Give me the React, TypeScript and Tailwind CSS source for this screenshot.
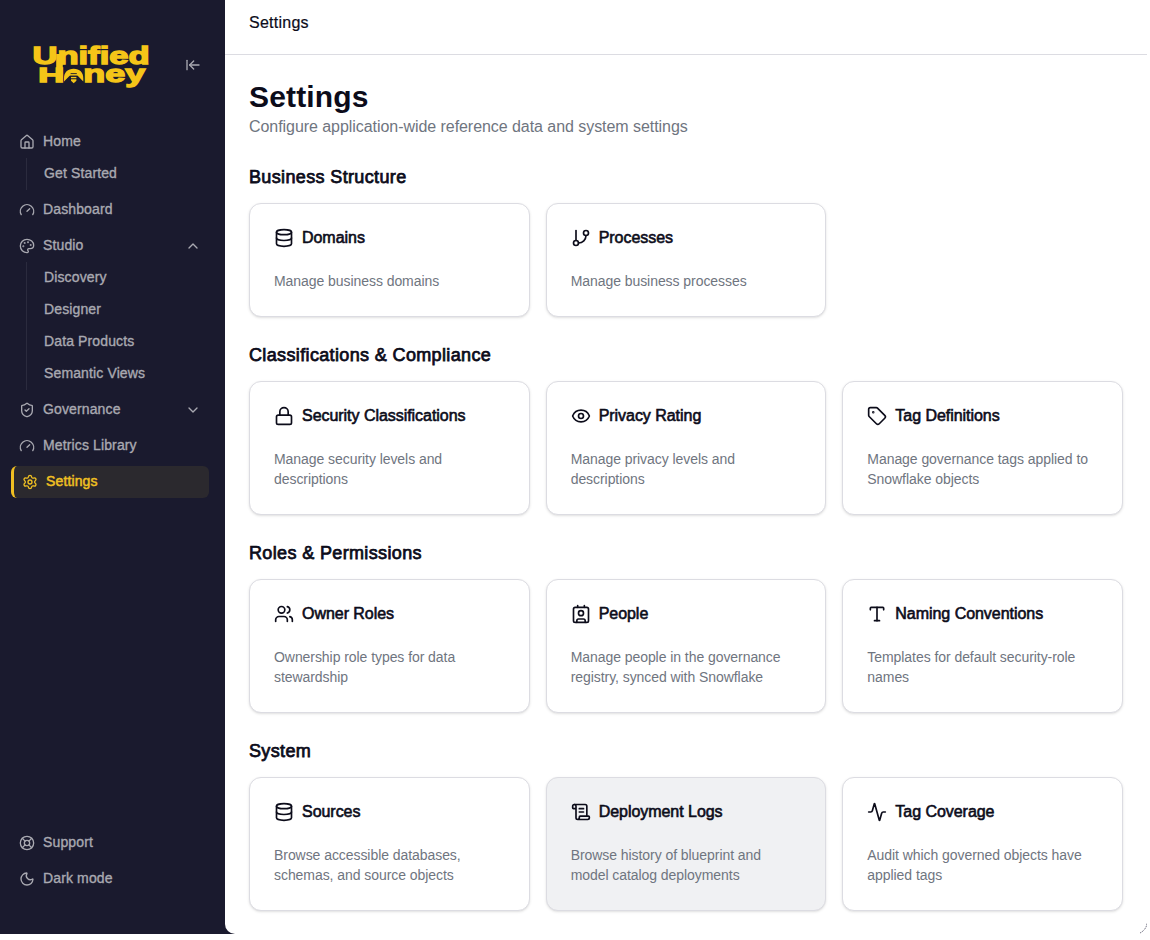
import type { ReactNode } from 'react'
import {
  Activity,
  ArrowLeftToLine,
  ChevronDown,
  ChevronUp,
  Contact,
  Database,
  Eye,
  Gauge,
  GitBranch,
  House,
  LifeBuoy,
  Lock,
  Moon,
  Palette,
  ScrollText,
  Settings,
  ShieldCheck,
  Tag,
  Type,
  Users,
  type LucideIcon,
} from 'lucide-react'
import { clsx } from 'clsx'

type SettingCard = {
  title: string
  description: string
  icon: LucideIcon
  highlighted?: boolean
}

const SECTIONS: { title: string; cards: SettingCard[] }[] = [
  {
    title: 'Business Structure',
    cards: [
      { title: 'Domains', description: 'Manage business domains', icon: Database },
      { title: 'Processes', description: 'Manage business processes', icon: GitBranch },
    ],
  },
  {
    title: 'Classifications & Compliance',
    cards: [
      { title: 'Security Classifications', description: 'Manage security levels and descriptions', icon: Lock },
      { title: 'Privacy Rating', description: 'Manage privacy levels and descriptions', icon: Eye },
      { title: 'Tag Definitions', description: 'Manage governance tags applied to Snowflake objects', icon: Tag },
    ],
  },
  {
    title: 'Roles & Permissions',
    cards: [
      { title: 'Owner Roles', description: 'Ownership role types for data stewardship', icon: Users },
      { title: 'People', description: 'Manage people in the governance registry, synced with Snowflake', icon: Contact },
      { title: 'Naming Conventions', description: 'Templates for default security-role names', icon: Type },
    ],
  },
  {
    title: 'System',
    cards: [
      { title: 'Sources', description: 'Browse accessible databases, schemas, and source objects', icon: Database },
      {
        title: 'Deployment Logs',
        description: 'Browse history of blueprint and model catalog deployments',
        icon: ScrollText,
        highlighted: true,
      },
      { title: 'Tag Coverage', description: 'Audit which governed objects have applied tags', icon: Activity },
    ],
  },
]

function Logo() {
  return (
    <svg
      aria-label="Unified Honey"
      className="h-[44px] w-[118px] overflow-visible fill-[#f5c518] font-bold tracking-normal"
      viewBox="0 0 118 44"
    >
      <g className="[-webkit-text-stroke:0]" stroke="#f5c518" strokeWidth="1.3">
        <text x="-0.6" y="18.200" fontSize="23.5" textLength="117.200" lengthAdjust="spacingAndGlyphs">Unified</text>
        <text x="5.200" y="36" fontSize="20" textLength="26" lengthAdjust="spacingAndGlyphs">H</text>
        <text x="50.200" y="36" fontSize="24" textLength="62" lengthAdjust="spacingAndGlyphs">ney</text>
      </g>
      {/* shared stem between the two lines */}
      <rect x="23.2" y="8" width="6.600" height="24" />
      {/* bee that stands in for the "o" */}
      <path d="M31 32.500c0-6.200 3.700-9.700 9.700-9.700s9.600 3.500 9.600 9.700v3l-5.600-5.700h-8l-5.700 5.700z" />
      <path d="M38 30.800h5.400v1.500H38zM38 33.200h5.400v1.500l-2.700 2.500-2.700-2.500z" />
      <path d="M37.600 27.600h6.200M37 30.200h7.400" fill="none" stroke="#1a1a2e" strokeWidth="0.9" />
    </svg>
  )
}

type NavItemProps = {
  icon: LucideIcon
  label: string
  active?: boolean
  trailing?: ReactNode
}

function NavItem({ icon: Icon, label, active, trailing }: NavItemProps) {
  return (
    <button
      className={clsx(
        'flex h-8 w-full items-center gap-2 rounded-md px-2 text-left',
        active && 'border-l-[3px] border-[#f0bf22] bg-[#2b292e] text-[#f0c022] [-webkit-text-stroke:0.5px]',
      )}
      type="button"
    >
      <Icon className="size-4 shrink-0" />
      <span className="flex-1 pb-0.5">{label}</span>
      {trailing}
    </button>
  )
}

function SubNav({ items }: { items: string[] }) {
  return (
    <div className="ml-[15px] border-l border-[#2b2b3e]">
      {items.map((item) => (
        <a className="flex h-8 items-center pb-0.5 pl-[17px]" key={item}>
          {item}
        </a>
      ))}
    </div>
  )
}

function Sidebar() {
  return (
    <aside className="flex w-[225px] shrink-0 flex-col pr-4 pl-[11px] text-sm tracking-[0.13px] text-[#a9a9b1] [-webkit-text-stroke:0.35px]">
      <div className="flex h-[126px] items-start justify-between pt-[46px] pr-2 pl-[22px]">
        <Logo />
        <ArrowLeftToLine className="mt-[11px] size-4" />
      </div>

      <nav className="flex flex-1 flex-col gap-1">
        <div>
          <NavItem icon={House} label="Home" />
          <SubNav items={['Get Started']} />
        </div>
        <NavItem icon={Gauge} label="Dashboard" />
        <div>
          <NavItem icon={Palette} label="Studio" trailing={<ChevronUp className="size-4" />} />
          <SubNav items={['Discovery', 'Designer', 'Data Products', 'Semantic Views']} />
        </div>
        <NavItem icon={ShieldCheck} label="Governance" trailing={<ChevronDown className="size-4" />} />
        <NavItem icon={Gauge} label="Metrics Library" />
        <NavItem active icon={Settings} label="Settings" />
      </nav>

      <div className="flex flex-col gap-1 pb-[39px]">
        <NavItem icon={LifeBuoy} label="Support" />
        <NavItem icon={Moon} label="Dark mode" />
      </div>
    </aside>
  )
}

function Card({ title, description, icon: Icon, highlighted }: SettingCard) {
  return (
    <article
      className={clsx(
        'flex flex-col rounded-xl border border-[#dcdce2] px-6 pt-6 pb-[25px] shadow-sm',
        highlighted ? 'bg-[#f0f1f3]' : 'bg-white',
      )}
    >
      <h3 className="flex h-5 items-center gap-2 text-base leading-5 tracking-[-0.04px] [-webkit-text-stroke:0.6px]">
        <Icon className="size-5 shrink-0" />
        {title}
      </h3>
      <p className="mt-[23px] text-sm tracking-[-0.06px] text-[#6f7580]">{description}</p>
    </article>
  )
}

export default function App() {
  return (
    <div className="h-[940px] w-full overflow-hidden bg-white font-['Liberation_Sans',sans-serif] text-[#0c0c1a]">
      <div className="flex h-[934px] w-[1147px] bg-[#1a1a2e]">
        <Sidebar />

        <main className="relative min-w-0 flex-1 rounded-bl-[10px] bg-white">
          <header className="flex h-[55px] items-center border-b border-[#dcdce2] px-6 pb-2">
            <span className="tracking-[0.25px] [-webkit-text-stroke:0.2px]">Settings</span>
          </header>

          <div className="flex flex-col gap-6 p-6">
            <div>
              <h1 className="text-3xl font-bold tracking-[0.15px]">Settings</h1>
              <p className="tracking-[-0.055px] text-[#6f7580]">
                Configure application-wide reference data and system settings
              </p>
            </div>

            {SECTIONS.map((section) => (
              <section className="flex flex-col gap-3" key={section.title}>
                <h2 className="text-lg leading-7 tracking-[0.36px] [-webkit-text-stroke:0.75px]">{section.title}</h2>
                <div className="grid grid-cols-3 gap-4">
                  {section.cards.map((card) => (
                    <Card key={card.title} {...card} />
                  ))}
                </div>
              </section>
            ))}
          </div>

          {/* window corner */}
          <svg className="absolute right-0 bottom-0 size-3" fill="none" viewBox="0 0 12 12">
            <path d="M12 1.500c-.5 4-3 7.500-7 9.500" stroke="#55556a" strokeDasharray="1.500 0.700" strokeWidth="0.8" />
          </svg>
        </main>
      </div>
    </div>
  )
}
